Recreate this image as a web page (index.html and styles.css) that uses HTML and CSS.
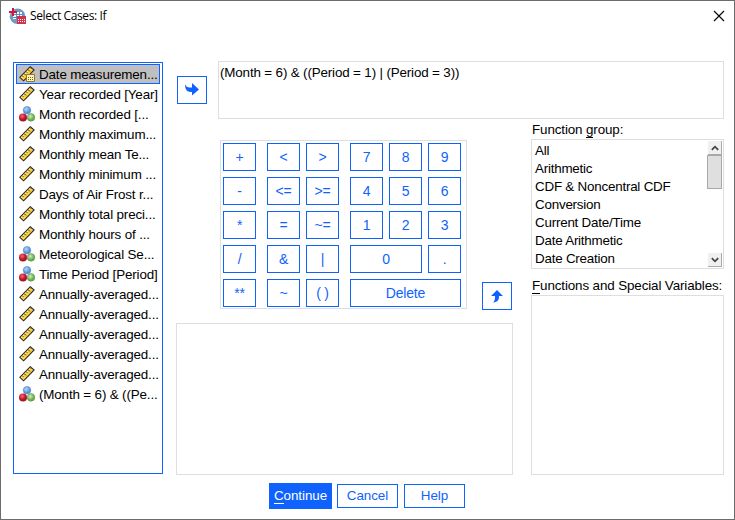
FILE: index.html
```
<!DOCTYPE html>
<html lang="en">
<head>
<meta charset="utf-8">
<title>Select Cases: If</title>
<link rel="stylesheet" href="styles.css">
</head>
<body>
<svg class="defs" width="0" height="0" aria-hidden="true">
  <defs>
    <radialGradient id="gb" cx=".4" cy=".35"><stop offset="0" stop-color="#b4d8fb"/><stop offset="1" stop-color="#5490d6"/></radialGradient>
    <radialGradient id="gr" cx=".4" cy=".35"><stop offset="0" stop-color="#f0707c"/><stop offset=".7" stop-color="#c81c30"/><stop offset="1" stop-color="#a81428"/></radialGradient>
    <radialGradient id="gg" cx=".4" cy=".35"><stop offset="0" stop-color="#d2eeb8"/><stop offset="1" stop-color="#68ab4c"/></radialGradient>
    <symbol id="ruler" viewBox="0 0 16 16">
      <path d="M.8 11.300 11.300 .7 15.100 4 4.600 14.800z" fill="#ffd23c" stroke="#2b2b2b" stroke-width="1.1"/>
      <path d="M2.200 11.500 12 1.900" stroke="#fff0b0" stroke-width="1"/>
      <path d="M3 9.500l1.300 1.300M5 7.500l1.900 1.900M7 5.500l1.300 1.300M9 3.500l1.900 1.900M11 1.500l1.300 1.300" stroke="#2b2b2b" stroke-width="1" fill="none"/>
    </symbol>
    <symbol id="balls" viewBox="0 0 16 16">
      <circle cx="8" cy="4.2" r="3.8" fill="url(#gb)" stroke="#4d83c4" stroke-width=".5"/>
      <circle cx="4" cy="11.4" r="4" fill="url(#gr)"/>
      <circle cx="12" cy="11.4" r="3.8" fill="url(#gg)" stroke="#578f40" stroke-width=".5"/>
    </symbol>
  </defs>
</svg>
<div class="dialog">
  <header class="titlebar">
    <svg class="app-icon" width="17" height="17" viewBox="0 0 17 17">
      <circle cx="8.500" cy="8.300" r="7.800" fill="#6d9bc8"/>
      <path d="M5 4h9v7H4V6z" fill="#fff"/>
      <path d="M7.500 4v7M10.500 4v7M13.500 4v7M4 6.500h11M4 9.500h11" stroke="#5d8dbd" fill="none"/>
      <path d="M4 0v8M0 4h8" stroke="#d1183a" stroke-width="2"/>
      <path d="M8 8h9v8H8z" fill="#d1334e"/>
      <path d="M9 11.500h7M9 13.500h7" stroke="#fff" stroke-dasharray="1 1"/>
    </svg>
    <span class="title">Select Cases: If</span>
    <svg class="close" width="12" height="12" viewBox="0 0 12 12"><path d="M1 1l10 10M11 1 1 11" stroke="#000" stroke-width="1.1"/></svg>
  </header>
  <main class="content">
    <ul class="variables">
      <li class="selected"><svg class="vi"><use href="#ruler"/><path d="M7.500 8.500h8v7h-8z" fill="#fff4ad" stroke="#8c7830"/><path d="M9 11.500h5M9 13.500h5" stroke="#76651e" stroke-dasharray="1 1"/></svg><span>Date measuremen...</span></li>
      <li><svg class="vi"><use href="#ruler"/></svg><span>Year recorded [Year]</span></li>
      <li><svg class="vi"><use href="#balls"/></svg><span>Month recorded [...</span></li>
      <li><svg class="vi"><use href="#ruler"/></svg><span>Monthly maximum...</span></li>
      <li><svg class="vi"><use href="#ruler"/></svg><span>Monthly mean Te...</span></li>
      <li><svg class="vi"><use href="#ruler"/></svg><span>Monthly minimum ...</span></li>
      <li><svg class="vi"><use href="#ruler"/></svg><span>Days of Air Frost r...</span></li>
      <li><svg class="vi"><use href="#ruler"/></svg><span>Monthly total preci...</span></li>
      <li><svg class="vi"><use href="#ruler"/></svg><span>Monthly hours of ...</span></li>
      <li><svg class="vi"><use href="#balls"/></svg><span>Meteorological Se...</span></li>
      <li><svg class="vi"><use href="#balls"/></svg><span>Time Period [Period]</span></li>
      <li><svg class="vi"><use href="#ruler"/></svg><span>Annually-averaged...</span></li>
      <li><svg class="vi"><use href="#ruler"/></svg><span>Annually-averaged...</span></li>
      <li><svg class="vi"><use href="#ruler"/></svg><span>Annually-averaged...</span></li>
      <li><svg class="vi"><use href="#ruler"/></svg><span>Annually-averaged...</span></li>
      <li><svg class="vi"><use href="#ruler"/></svg><span>Annually-averaged...</span></li>
      <li><svg class="vi"><use href="#balls"/></svg><span>(Month = 6) &amp; ((Pe...</span></li>
    </ul>
    <section class="workspace">
      <div class="expression-row">
        <button class="btn move"><svg width="14" height="14" viewBox="0 0 14 14"><path d="M0 1c1 3 3 3.500 7 3.500V0l7 6.500-7 6V9C3 9 0 8 0 1z" fill="#0f62fe"/></svg></button>
        <div class="expression">(Month = 6) &amp; ((Period = 1) | (Period = 3))</div>
      </div>
      <div class="lower">
        <div class="middle">
          <div class="pad-row">
            <div class="keypad">
              <button class="btn">+</button><button class="btn c3">&lt;</button><button class="btn c4">&gt;</button><button class="btn c6">7</button><button class="btn c7">8</button><button class="btn c8">9</button>
              <button class="btn">-</button><button class="btn c3">&lt;=</button><button class="btn c4">&gt;=</button><button class="btn c6">4</button><button class="btn c7">5</button><button class="btn c8">6</button>
              <button class="btn">*</button><button class="btn c3">=</button><button class="btn c4">~=</button><button class="btn c6">1</button><button class="btn c7">2</button><button class="btn c8">3</button>
              <button class="btn">/</button><button class="btn c3">&amp;</button><button class="btn c4">|</button><button class="btn zero">0</button><button class="btn c8">.</button>
              <button class="btn">**</button><button class="btn c3">~</button><button class="btn c4">( )</button><button class="btn delete">Delete</button>
            </div>
            <button class="btn move"><svg width="12" height="13" viewBox="0 0 12 13"><path d="M6 0l6 6H8c0 4-1 6-6 6.500C4 11 4 9 4 6H0z" fill="#0f62fe"/></svg></button>
          </div>
          <div class="box description"></div>
        </div>
        <div class="functions">
          <label class="label">Function <u>g</u>roup:</label>
          <div class="box group">
            <ul class="group-list">
              <li>All</li><li>Arithmetic</li><li>CDF &amp; Noncentral CDF</li><li>Conversion</li><li>Current Date/Time</li><li>Date Arithmetic</li><li>Date Creation</li>
            </ul>
            <div class="scrollbar">
              <div class="scroll-btn"><svg width="8" height="6" viewBox="0 0 8 6"><path d="M.8 4.800 4 1.600l3.200 3.200" fill="none" stroke="#444" stroke-width="1.700"/></svg></div>
              <div class="thumb"></div>
              <div class="scroll-btn down"><svg width="8" height="6" viewBox="0 0 8 6"><path d="M.8 1.200 4 4.400l3.200-3.200" fill="none" stroke="#444" stroke-width="1.700"/></svg></div>
            </div>
          </div>
          <label class="label second"><u>F</u>unctions and Special Variables:</label>
          <div class="box special"></div>
        </div>
      </div>
    </section>
  </main>
  <footer class="actions">
    <button class="btn primary"><span><u>C</u>ontinue</span></button>
    <button class="btn">Cancel</button>
    <button class="btn">Help</button>
  </footer>
</div>
</body>
</html>
```
FILE: styles.css
```
* { box-sizing: border-box; }
body { margin: 0; font: 13.4px/18px "Liberation Sans", Arial, sans-serif; letter-spacing: -.12px; color: #000; }
ul { list-style: none; margin: 0; padding: 0; }
u { text-decoration: none; box-shadow: inset 0 -1px currentColor; display: inline-block; line-height: 16px; }
.defs { display: block; height: 0; }
.dialog { width: 735px; height: 520px; border: 1px solid #6c6c6c; background: #fff; overflow: hidden; }
.titlebar { display: flex; align-items: center; height: 30px; padding: 0 9px 0 8px; }
.title { margin-left: 4px; font: 12px/18px "Open Sans", sans-serif; letter-spacing: -.38px; flex: 1; }
.app-icon, .close { flex: none; }
.content { display: flex; gap: 13px; padding: 30px 10px 0 12px; height: 444px; }
.variables { width: 150px; height: 412px; margin-top: 1px; border: 1px solid #0f62fe; padding: 1px 2px; flex: none; }
.variables li { display: flex; align-items: center; height: 20px; padding: 0 0 0 3px; white-space: nowrap; letter-spacing: -.15px; }
.variables li span { padding-top: 1px; line-height: 17px; }
.variables .selected { background: #bfbfbf; border: 1px solid #0f62fe; padding-left: 2px; }
.vi { width: 16px; height: 16px; margin-right: 4px; flex: none; overflow: visible; }
.workspace { flex: 1; min-width: 0; }
.expression-row { display: flex; gap: 11px; padding-left: 1px; align-items: center; }
.expression { flex: 1; height: 58px; border: 1px solid #dedede; padding: 2px 1px; letter-spacing: -.15px; }
.btn { display: flex; align-items: center; justify-content: center; height: 28px; padding: 0; border: 1px solid #0f62fe; background: #fff; color: #0f62fe; font: inherit; letter-spacing: -.05px; border-radius: 0; }
.move { width: 30px; flex: none; }
.lower { display: flex; gap: 18px; }
.middle { width: 337px; padding-top: 21px; }
.pad-row { display: flex; align-items: flex-end; justify-content: space-between; padding: 0 1px 0 44px; height: 170px; }
.keypad { display: grid; grid-template-columns: 33px 11px 33px 6px 33px 11px 33px 6px 33px 6px 33px; grid-auto-rows: 28px; row-gap: 6px; align-self: flex-start; border: 1px solid #dedede; width: 247px; height: 169px; padding: 2px; }
.keypad .btn { grid-column: 1; font-size: 14px; letter-spacing: -.2px; }
.keypad .c3 { grid-column: 3; }
.keypad .c4 { grid-column: 5; }
.keypad .c6 { grid-column: 7; }
.keypad .c7 { grid-column: 9; }
.keypad .c8 { grid-column: 11; }
.keypad .zero { grid-column: 7 / 10; }
.keypad .delete { grid-column: 7 / 12; }
.box { border: 1px solid #dedede; }
.description { height: 152px; margin-top: 13px; }
.functions { width: 193px; padding-top: 2px; }
.label { display: block; height: 18px; padding-left: 1px; white-space: nowrap; }
.group { display: flex; height: 130px; padding: 1px; }
.group-list { flex: 1; padding: 1px 0 0 2px; letter-spacing: -.22px; }
.group-list li { height: 18px; white-space: nowrap; }
.scrollbar { width: 15px; display: flex; flex-direction: column; }
.scroll-btn { height: 14px; margin-left: 1px; background: #f0f0f0; border-right: 1px solid #aaa; border-bottom: 1px solid #aaa; display: flex; align-items: center; justify-content: center; }
.thumb { height: 34px; background: #dfdfdf; border: 1px solid #a8a8a8; }
.down { margin-top: auto; }
.second { margin-top: 8px; }
.special { height: 180px; }
.actions { display: flex; align-items: center; padding: 8px 0 0 268px; }
.actions .btn { width: 61px; height: 24px; margin-right: 6px; }
.actions .primary { width: 63px; height: 26px; margin-right: 5px; background: #0f62fe; color: #fff; }
```
